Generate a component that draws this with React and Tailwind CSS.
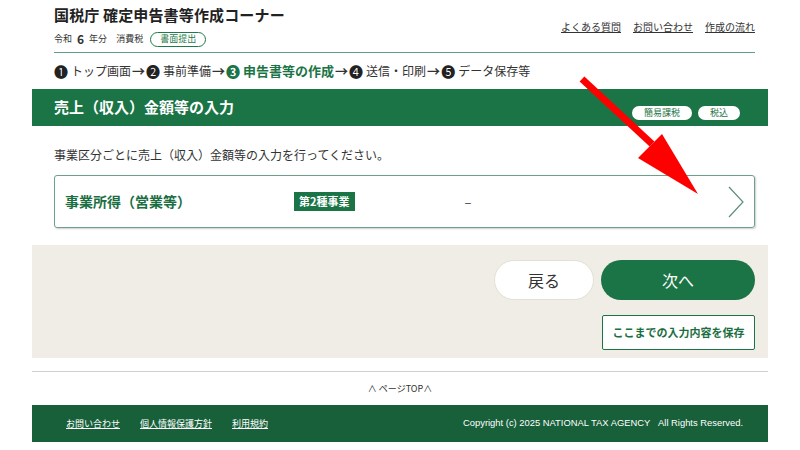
import React from 'react'

const font = { fontFamily: '"Noto Sans CJK JP", "Noto Sans", sans-serif' }

const steps = [
  { n: '❶', label: 'トップ画面' },
  { n: '❷', label: '事前準備' },
  { n: '❸', label: '申告書等の作成', active: true },
  { n: '❹', label: '送信・印刷' },
  { n: '❺', label: 'データ保存等' },
]

const App = () => {
  return (
    <div className="relative w-[800px] h-[450px] bg-white overflow-hidden text-[#333]" style={font}>
      <div className="mx-[32px] w-[736px]">
        {/* header */}
        <header className="pl-[22px] pr-[13px] pt-[4px]">
          <div className="flex items-start justify-between">
            <div>
              <h1 className="text-[15px] font-bold leading-[22px] tracking-[0.01em] text-[#222]">
                国税庁 確定申告書等作成コーナー
              </h1>
              <div className="flex items-center mt-[5px] text-[9px] leading-[16px] text-[#333]">
                <span>令和</span>
                <span className="text-[12px] font-bold mx-[5px]">6</span>
                <span>年分</span>
                <span className="ml-[9px]">消費税</span>
                <span className="ml-[7px] px-[9px] h-[15px] flex items-center rounded-full border border-[#1f7a4a] text-[#1f7a4a] text-[9px]">
                  書面提出
                </span>
              </div>
            </div>
            <nav className="flex gap-[12px] text-[10px] mt-[15px] text-[#333]">
              <a className="underline">よくある質問</a>
              <a className="underline">お問い合わせ</a>
              <a className="underline">作成の流れ</a>
            </nav>
          </div>
          <div className="mt-[5px] border-t border-[#5f9f84]" />
          <div className="flex items-center h-[36px] text-[12px] text-[#333]">
            {steps.map((s, i) => (
              <React.Fragment key={s.n}>
                {i > 0 && <span className="mx-[1px] text-[13px] font-bold">→</span>}
                <span className={s.active ? 'text-[#1b7445] text-[13px] font-bold flex items-center' : 'flex items-center'}>
                  <span className={s.active ? 'text-[14px] mr-[3px] text-[#1b7445]' : 'text-[14px] mr-[3px] text-[#222]'}>{s.n}</span>
                  {s.label}
                </span>
              </React.Fragment>
            ))}
          </div>
        </header>

        {/* section title */}
        <div className="h-[37px] bg-[#1b7445] flex items-center justify-between pl-[22px] pr-[28px]">
          <h2 className="text-[15px] font-bold text-white">売上（収入）金額等の入力</h2>
          <div className="flex gap-[6px] self-end mb-[6px]">
            <span className="bg-white text-[#1b7445] rounded-full px-[12px] h-[14px] flex items-center text-[9px]">簡易課税</span>
            <span className="bg-white text-[#1b7445] rounded-full px-[12px] h-[14px] flex items-center text-[9px]">税込</span>
          </div>
        </div>

        {/* content */}
        <div className="pl-[22px] pr-[13px] pt-[20px] pb-[17px]">
          <p className="text-[12px] leading-[18px] text-[#333]">事業区分ごとに売上（収入）金額等の入力を行ってください。</p>
          <div className="mt-[11px] h-[53px] border border-[#6f9f8c] rounded-[3px] shadow-[1px_1px_2px_rgba(0,0,0,0.2)] flex items-center pl-[10px] pr-[9px]">
            <span className="w-[229px] text-[14px] font-bold text-[#1b6e42]">事業所得（営業等）</span>
            <span className="bg-[#1b7445] text-white text-[11px] font-bold px-[5px] h-[19px] flex items-center">第2種事業</span>
            <span className="ml-[110px] text-[13px] text-[#444]">–</span>
            <svg className="ml-auto" width="18" height="32" viewBox="0 0 18 32" fill="none">
              <path d="M2 1 L16 16 L2 31" stroke="#5c8e7c" strokeWidth="1.2" />
            </svg>
          </div>
        </div>

        {/* actions */}
        <div className="bg-[#f0ede6] h-[113px] px-[13px] pt-[15px] flex flex-col items-end">
          <div className="flex gap-[7px]">
            <button className="w-[100px] h-[40px] rounded-full bg-white border border-[#e4e0d7] text-[16px] text-[#333]">戻る</button>
            <button className="w-[154px] h-[40px] rounded-full bg-[#1b7445] text-white text-[16px]">次へ</button>
          </div>
          <button className="mt-[15px] w-[153px] h-[35px] bg-white border border-[#1b7445] rounded-[2px] text-[11px] font-bold text-[#1b6e42]">
            ここまでの入力内容を保存
          </button>
        </div>

        {/* page top */}
        <div className="mt-[13px] border-t border-[#cfcfcf]" />
        <div className="h-[33px] flex items-center justify-center text-[9px] text-[#333]">
          ∧ ページTOP∧
        </div>

        {/* footer */}
        <footer className="h-[37px] bg-[#17603a] flex items-center justify-between pl-[34px] pr-[25px] text-[9px] text-white">
          <div className="flex gap-[20px]">
            <a className="underline">お問い合わせ</a>
            <a className="underline">個人情報保護方針</a>
            <a className="underline">利用規約</a>
          </div>
          <span className="text-[9.4px]" style={{ fontFamily: '"Liberation Sans", sans-serif' }}>
            Copyright (c) 2025 NATIONAL TAX AGENCY&nbsp;&nbsp;&nbsp;All Rights Reserved.
          </span>
        </footer>
      </div>

      {/* red arrow annotation */}
      <svg className="absolute left-0 top-0 pointer-events-none" width="800" height="450" viewBox="0 0 800 450">
        <line x1="582" y1="79" x2="652" y2="144" stroke="#ff0000" strokeWidth="7" />
        <polygon points="638,158 662,134 698,194" fill="#ff0000" />
      </svg>
    </div>
  )
}

export default App
